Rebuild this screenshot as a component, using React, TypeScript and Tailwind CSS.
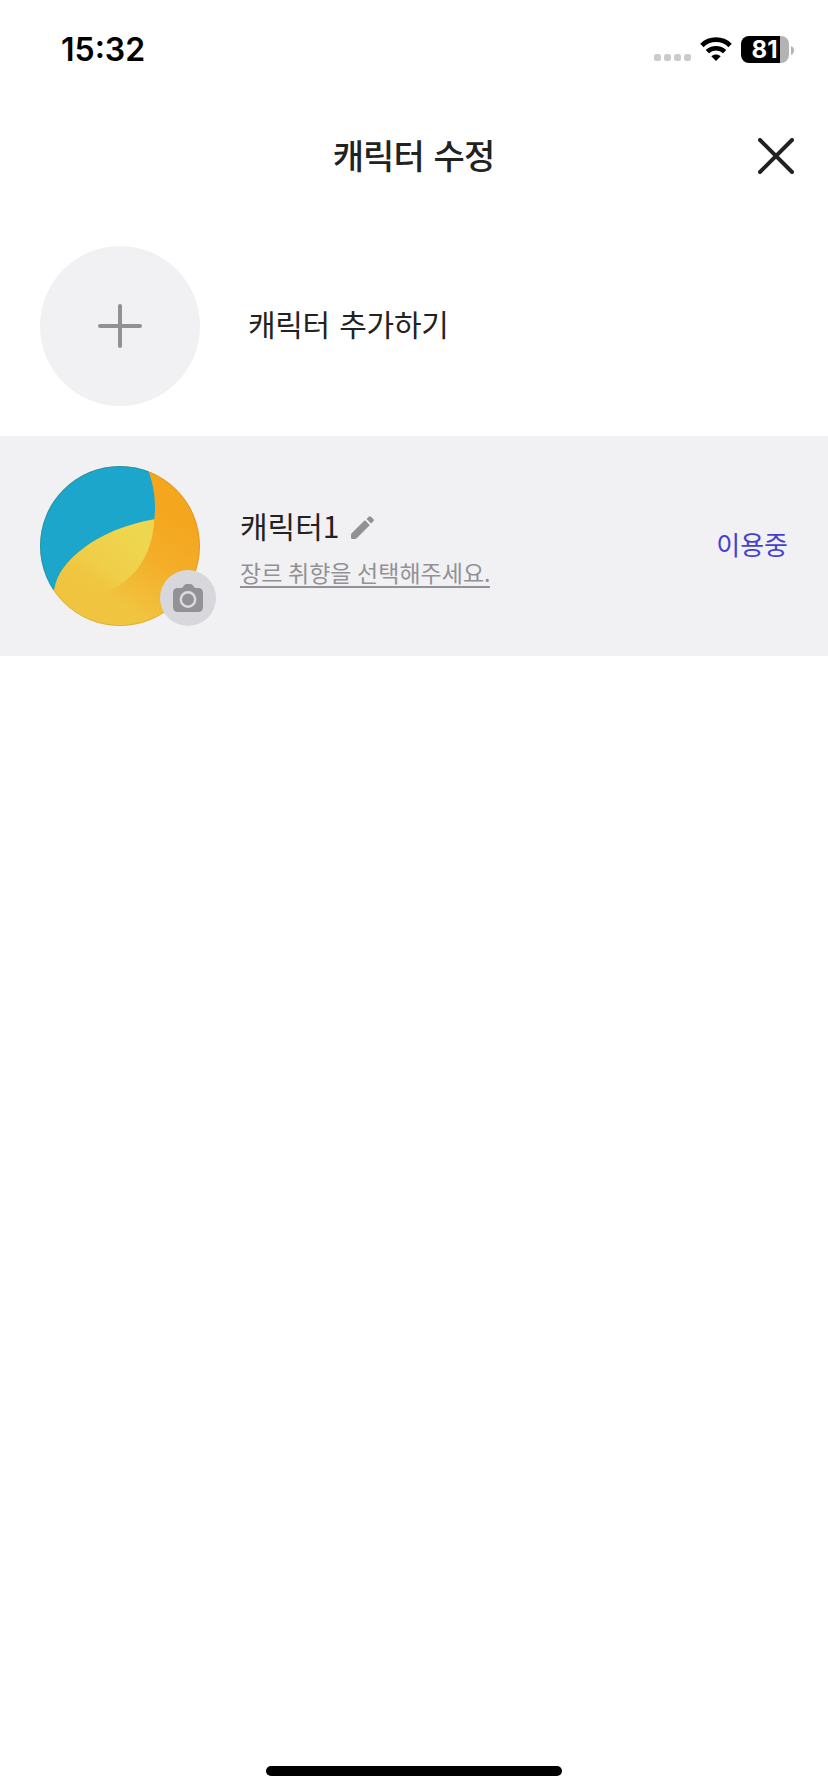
import React from 'react';

const StatusBar: React.FC = () => (
  <div className="flex h-[100px] items-center justify-between pl-[61px] pr-[34px]">
    <span className="font-['Inter',sans-serif] text-[32px] font-semibold leading-none text-black">15:32</span>
    <div className="flex items-center">
      <div className="mr-[9px] mt-[15px] flex gap-[3px]">
        {[0, 1, 2, 3].map((dot) => (
          <span key={dot} className="size-[7px] rounded-[2.5px] bg-[#cbcbcb]" />
        ))}
      </div>
      <svg className="mb-[2px] mr-[9px] h-6 w-8" viewBox="0 0 32 24" fill="none" stroke="#000">
        <path d="M1.9 8.4C9.8.8 22.2.8 30.1 8.4" strokeWidth="4.8" />
        <path d="M7.3 14.7c4.9-4.7 12.5-4.7 17.4 0" strokeWidth="4.6" />
        <path d="M16 24l-4.700-4.800c2.700-2.400 6.700-2.400 9.400 0z" fill="#000" stroke="none" />
      </svg>
      <div className="mb-px flex h-[27px] w-12 items-center justify-center overflow-hidden rounded-lg bg-[linear-gradient(90deg,#000_39px,#b3b3b3_39px)] pr-px">
        <span className="font-['Inter',sans-serif] text-[24px] font-bold leading-none text-white">81</span>
      </div>
      <svg className="ml-[2px] h-[9px] w-[3px]" viewBox="0 0 3 9">
        <path d="M0 0c4 1.5 4 7.5 0 9z" fill="#b3b3b3" />
      </svg>
    </div>
  </div>
);

const Header: React.FC = () => (
  <header className="grid h-28 grid-cols-[1fr_auto_1fr] items-center pr-[34px]">
    <span className="w-[34px]" />
    <h1 className="mb-[2px] ml-[33px] text-[34px] font-medium leading-none tracking-[-0.9px] [word-spacing:3px]">캐릭터 수정</h1>
    <button className="justify-self-end" aria-label="닫기">
      <svg className="size-9" viewBox="0 0 36 36" stroke="#222" strokeWidth="4" strokeLinecap="round">
        <path d="M2 2l32 32M34 2L2 34" />
      </svg>
    </button>
  </header>
);

const Avatar: React.FC = () => (
  <svg className="size-40" viewBox="0 0 160 160">
    <defs>
      <linearGradient id="orange" x1="132" y1="50" x2="76" y2="136" gradientUnits="userSpaceOnUse">
        <stop offset="0" stopColor="#f5a61f" />
        <stop offset=".45" stopColor="#f4ae29" />
        <stop offset="1" stopColor="#f1c440" />
      </linearGradient>
      <linearGradient id="leaf" x1="40" y1="130" x2="100" y2="75" gradientUnits="userSpaceOnUse">
        <stop offset="0" stopColor="#f0c742" />
        <stop offset="1" stopColor="#efd64f" />
      </linearGradient>
      <linearGradient id="fade" x1="76" y1="110" x2="62" y2="136" gradientUnits="userSpaceOnUse">
        <stop offset="0" stopColor="#fff" />
        <stop offset="1" stopColor="#fff" stopOpacity="0" />
      </linearGradient>
      <mask id="leafMask">
        <rect width="160" height="160" fill="url(#fade)" />
      </mask>
      <clipPath id="disc">
        <circle cx="80" cy="80" r="80" />
      </clipPath>
    </defs>
    <g clipPath="url(#disc)">
      <rect width="160" height="160" fill="url(#orange)" />
      <path d="M114.3 53.3C113 85 98 111 70 124.7C52 132 30 132 14 124V50H110z" fill="url(#leaf)" mask="url(#leafMask)" />
      <path d="M0 0H106.5C114 18 116.5 36 114.3 53.3C86 58 61 69 45 81C26 95 17 108 14.3 123L0 132z" fill="#1ca6cb" />
      <circle cx="80" cy="80" r="79.5" fill="none" stroke="#000" strokeOpacity=".1" />
    </g>
  </svg>
);

const CameraBadge: React.FC = () => (
  <button className="absolute -right-4 bottom-0 flex size-14 items-center justify-center rounded-full bg-[#d8d8dc]" aria-label="사진 변경">
    <svg className="h-7 w-[30px]" viewBox="0 0 30 28">
      <path d="M5 4h4l2.200-2.700Q12.200 0 14 0h3q1.800 0 2.800 1.300L22 4h3q5 0 5 5v14q0 5-5 5H5q-5 0-5-5V9q0-5 5-5z" fill="#919196" />
      <circle cx="15" cy="15.5" r="7.2" fill="none" stroke="#dcdce0" strokeWidth="2.4" />
    </svg>
  </button>
);

const AddRow: React.FC = () => (
  <div className="flex items-center px-10 pb-[30px] pt-[34px]">
    <div className="flex size-40 items-center justify-center rounded-full bg-[#f1f1f3]">
      <svg className="size-11" viewBox="0 0 44 44" stroke="#919191" strokeWidth="4" strokeLinecap="round">
        <path d="M22 2v40M2 22h40" />
      </svg>
    </div>
    <span className="mb-[6px] ml-12 text-[30px] leading-none tracking-[-0.3px] [word-spacing:3px]">캐릭터 추가하기</span>
  </div>
);

const CharacterRow: React.FC = () => (
  <div className="flex h-[220px] items-center bg-[#f1f1f4] px-10">
    <div className="relative">
      <Avatar />
      <CameraBadge />
    </div>
    <div className="ml-10 flex flex-col">
      <div className="flex items-center">
        <span className="text-[30px] leading-10">캐릭터1</span>
        <svg className="ml-3 mt-[5px] size-[23px]" viewBox="0 0 23 23" fill="#919191">
          <path d="M.7 17.3L13.2 4.8q.7-.7 1.4 0l3.6 3.6q.7.7 0 1.4L5.7 22.3q-.7.7-1.7.7H1.5Q0 23 0 21.5V19q0-1 .7-1.7zM15.5 2.900l2.200-2.200q1.100-1.100 2.200 0l2.400 2.400q1.100 1.100 0 2.200l-2.200 2.200z" />
        </svg>
      </div>
      <div className="mt-[14px] self-start border-b-2 border-[#919196] text-[23px] leading-[27px] text-[#919196] [word-spacing:0.5px]">장르 취향을 선택해주세요.</div>
    </div>
    <span className="mb-1 ml-auto text-[26px] leading-none text-[#4541cf]">이용중</span>
  </div>
);

export default function App() {
  return (
    <div className="flex h-[1792px] w-[828px] flex-col bg-white font-['Noto_Sans_CJK_KR',sans-serif] text-[#222]">
      <StatusBar />
      <Header />
      <main className="flex-1">
        <AddRow />
        <CharacterRow />
      </main>
      <div className="mx-auto mb-4 h-[10px] w-[296px] rounded-full bg-black" />
    </div>
  );
}
